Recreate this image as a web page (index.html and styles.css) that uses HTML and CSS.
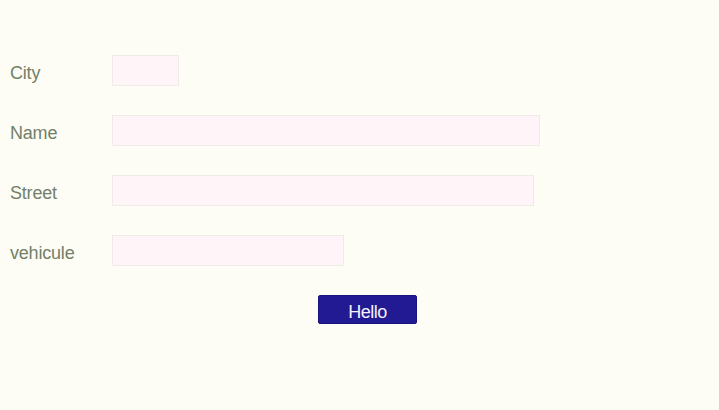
FILE: index.html
```html
<!DOCTYPE html>
<html>
<head>
<meta charset="utf-8">
<link rel="stylesheet" href="styles.css">
</head>
<body>
<form class="form">
  <div class="row">
    <label class="label">City</label>
    <input class="field field-city" type="text">
  </div>
  <div class="row">
    <label class="label">Name</label>
    <input class="field field-name" type="text">
  </div>
  <div class="row">
    <label class="label">Street</label>
    <input class="field field-street" type="text">
  </div>
  <div class="row">
    <label class="label">vehicule</label>
    <input class="field field-vehicule" type="text">
  </div>
  <div class="actions">
    <button class="btn" type="button">Hello</button>
  </div>
</form>
</body>
</html>
```
FILE: styles.css
```css
html, body {
  margin: 0;
  padding: 0;
  background: #fdfdf5;
}
.form {
  display: flex;
  flex-direction: column;
  gap: 29px;
  padding: 55px 0 0 10px;
  font-family: "Liberation Sans", Arial, sans-serif;
}
.row {
  display: flex;
  align-items: center;
  height: 31px;
}
.label {
  width: 102px;
  font-size: 18px;
  color: #72806a;
  letter-spacing: -0.2px;
  padding-top: 5px;
}
.field {
  box-sizing: border-box;
  height: 31px;
  margin: 0;
  padding: 0;
  background: #fff4f8;
  border: 1px solid #efebe6;
  outline: none;
}
.field-city { width: 67px; }
.field-name { width: 428px; }
.field-street { width: 422px; }
.field-vehicule { width: 232px; }
.actions {
  display: flex;
  padding-left: 308px;
}
.btn {
  box-sizing: border-box;
  width: 99px;
  height: 29px;
  margin: 0;
  padding: 6px 0 0;
  background: #211a92;
  border: 1px solid #1a1480;
  border-radius: 2px;
  color: #f4f2fa;
  font-family: "Liberation Sans", Arial, sans-serif;
  font-size: 18px;
  letter-spacing: -0.5px;
}
```
